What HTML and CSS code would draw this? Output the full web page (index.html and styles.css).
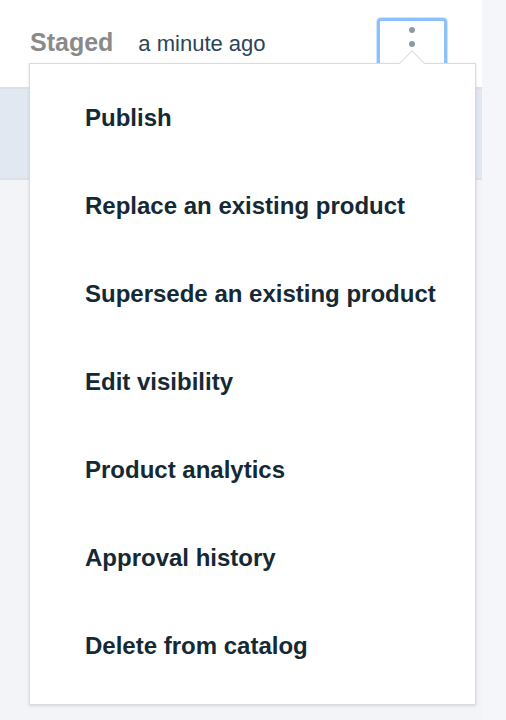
FILE: index.html
```html
<!DOCTYPE html>
<html>
<head>
<meta charset="utf-8">
<link rel="stylesheet" href="styles.css">
</head>
<body>
<div class="page">
  <div class="main">
    <header class="bar">
      <div class="meta">
        <span class="status">Staged</span>
        <span class="time">a minute ago</span>
      </div>
      <button class="kebab" aria-label="Options">
        <span class="dot"></span>
        <span class="dot"></span>
        <span class="dot"></span>
      </button>
    </header>
    <div class="band"></div>
    <div class="rest"></div>
  </div>
  <aside class="side"></aside>
  <ul class="menu">
    <li class="caret"></li>
    <li class="item">Publish</li>
    <li class="item">Replace an existing product</li>
    <li class="item">Supersede an existing product</li>
    <li class="item">Edit visibility</li>
    <li class="item">Product analytics</li>
    <li class="item">Approval history</li>
    <li class="item">Delete from catalog</li>
  </ul>
</div>
</body>
</html>
```
FILE: styles.css
```css
* { box-sizing: border-box; }
html, body { margin: 0; padding: 0; }
body {
  font-family: "Liberation Sans", Arial, sans-serif;
  background: #f3f4f8;
}
.page {
  position: relative;
  display: flex;
  height: 720px;
  overflow: hidden;
}
.main {
  width: 482px;
  display: flex;
  flex-direction: column;
}
.side {
  flex: 1;
  background: #f5f6fa;
}
.bar {
  height: 87px;
  background: #fff;
  display: flex;
  align-items: flex-start;
  padding-left: 30px;
  overflow: hidden;
}
.meta {
  display: flex;
  align-items: baseline;
  gap: 25px;
  margin-top: 28px;
  line-height: 28px;
}
.status {
  font-size: 25px;
  font-weight: bold;
  color: #8a8a8a;
}
.time {
  font-size: 22px;
  color: #2b4556;
}
.kebab {
  margin-left: auto;
  margin-right: 35px;
  margin-top: 18px;
  width: 70px;
  height: 64px;
  border: 3px solid #8cc2fb;
  border-radius: 4px;
  box-shadow: 0 0 0 1px #cfe5fd;
  background: #fff;
  padding: 6px 0 0;
  display: flex;
  flex-direction: column;
  align-items: center;
  gap: 8px;
}
.dot {
  width: 6px;
  height: 6px;
  border-radius: 50%;
  background: #8d9aa5;
}
.band {
  height: 93px;
  background: #e1e8f2;
  border-top: 2px solid #dde1e6;
  border-bottom: 2px solid #dde1e6;
}
.rest {
  flex: 1;
  background: #f3f4f8;
}
.menu {
  position: absolute;
  left: 29px;
  top: 63px;
  width: 447px;
  height: 642px;
  margin: 0;
  list-style: none;
  background: #fff;
  border: 1px solid #d8dce1;
  box-shadow: 0 1px 3px rgba(0, 0, 0, 0.12);
  padding: 10px 0 14px;
}
.caret {
  position: absolute;
  left: 373px;
  top: -10px;
  width: 18px;
  height: 18px;
  background: #fff;
  border-top: 1px solid #d8dce1;
  border-left: 1px solid #d8dce1;
  transform: rotate(45deg);
}
.item {
  height: 88px;
  line-height: 88px;
  padding-left: 55px;
  font-size: 24px;
  font-weight: bold;
  color: #152935;
  white-space: nowrap;
}
```
